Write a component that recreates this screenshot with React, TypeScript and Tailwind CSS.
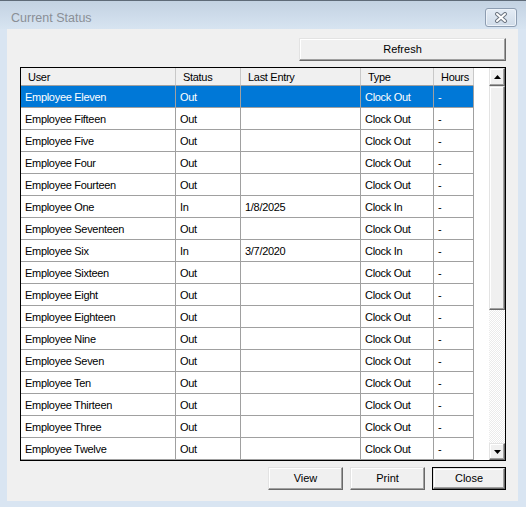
import React from "react";

type Row = { user: string; status: string; last: string; type: string; hours: string };

const names = [
  "Eleven", "Fifteen", "Five", "Four", "Fourteen", "One", "Seventeen", "Six", "Sixteen",
  "Eight", "Eighteen", "Nine", "Seven", "Ten", "Thirteen", "Three", "Twelve",
];

const rows: Row[] = names.map((n) => {
  if (n === "One") return { user: "Employee One", status: "In", last: "1/8/2025", type: "Clock In", hours: "-" };
  if (n === "Six") return { user: "Employee Six", status: "In", last: "3/7/2020", type: "Clock In", hours: "-" };
  return { user: "Employee " + n, status: "Out", last: "", type: "Clock Out", hours: "-" };
});

const font = { fontFamily: '"Liberation Sans", Arial, sans-serif' };

function Btn({ label, def, className }: { label: string; def?: boolean; className: string }) {
  const inner = (
    <div className="flex h-full w-full items-center justify-center border border-t-[#e3e3e3] border-l-[#e3e3e3] border-b-[#696969] border-r-[#696969] bg-[#f0f0f0] text-[11px] text-black shadow-[inset_-1px_-1px_0_#a0a0a0,inset_1px_1px_0_#ffffff]">
      {label}
    </div>
  );
  return def ? (
    <div className={"border border-black " + className}>{inner}</div>
  ) : (
    <div className={className}>{inner}</div>
  );
}

function ScrollBox({ className, children }: { className: string; children?: React.ReactNode }) {
  return (
    <div className={"flex items-center justify-center border border-t-[#e3e3e3] border-l-[#e3e3e3] border-b-[#696969] border-r-[#696969] bg-[#f0f0f0] shadow-[inset_-1px_-1px_0_#a0a0a0,inset_1px_1px_0_#ffffff] " + className}>
      {children}
    </div>
  );
}

const cols = ["w-[155px]", "w-[65px]", "w-[120px]", "w-[73px]", "w-[40px]"];

export default function App() {
  return (
    <div className="flex h-[507px] w-[526px] flex-col border-t border-t-[#5f6b78] bg-[#d9e5f2]" style={font}>
      {/* Title bar */}
      <div className="flex h-[28px] items-start justify-between bg-gradient-to-b from-[#c3d2e2] to-[#d7e4f1] pl-[11px] pr-[9px] pt-[7px]">
        <span className="mt-[3px] text-[12.5px] leading-[15px] text-[#8a8f96]">Current Status</span>
        <div className="flex h-[19px] w-[32px] items-center justify-center rounded-[3px] border border-[#8d9db1] bg-gradient-to-b from-[#e4ecf5] to-[#cfdbe8] shadow-[inset_0_0_0_1px_#eef3f9]">
          <svg width="14" height="11" viewBox="0 0 14 11">
            <path d="M3 2 L11 9 M11 2 L3 9" stroke="#6d7682" strokeWidth="4" strokeLinecap="round" />
            <path d="M3 2 L11 9 M11 2 L3 9" stroke="#ffffff" strokeWidth="2" strokeLinecap="round" />
          </svg>
        </div>
      </div>

      {/* Content */}
      <div className="mb-[6px] ml-[7px] mr-[8px] flex flex-1 flex-col bg-[#f0f0f0] pb-[11px] pl-[13px] pr-[12px] pt-[9px]">
        <div className="flex justify-end">
          <Btn label="Refresh" className="h-[23px] w-[207px]" />
        </div>

        {/* List */}
        <div className="mt-[6px] flex h-[394px] w-[486px] border border-black bg-white tracking-[-0.3px]">
          <div className="flex flex-1 flex-col">
            <div className="flex h-[18px]">
              {["User", "Status", "Last Entry", "Type", "Hours"].map((h, i) => (
                <div
                  key={h}
                  className={cols[i] + " flex items-center border-b border-r border-b-[#a0a0a0] border-r-[#c8c8c8] bg-[#f0f0f0] pl-[7px] pt-[1px] text-[11px] text-black"}
                >
                  {h}
                </div>
              ))}
            </div>
            {rows.map((r, ri) => {
              const sel = ri === 0;
              const vals = [r.user, r.status, r.last, r.type, r.hours];
              return (
                <div key={ri} className="flex h-[22px]">
                  {vals.map((v, i) => (
                    <div
                      key={i}
                      className={
                        cols[i] +
                        " flex items-center overflow-hidden whitespace-nowrap border-b border-r border-[#a0a0a0] pl-[4px] pt-[1px] text-[11px] " +
                        (sel ? "bg-[#0078d7] text-white" : "text-black")
                      }
                    >
                      {v}
                    </div>
                  ))}
                </div>
              );
            })}
          </div>
          {/* Scrollbar */}
          <div className="flex w-[16px] flex-col">
            <ScrollBox className="h-[18px]">
              <svg width="7" height="4" viewBox="0 0 7 4">
                <path d="M0 4 L3.5 0 L7 4 Z" fill="#000" />
              </svg>
            </ScrollBox>
            <ScrollBox className="h-[224px]" />
            <div className="flex-1 bg-[repeating-conic-gradient(#ffffff_0_25%,#ebebeb_0_50%)] bg-[length:2px_2px]" />
            <ScrollBox className="h-[17px]">
              <svg width="7" height="4" viewBox="0 0 7 4">
                <path d="M0 0 L7 0 L3.5 4 Z" fill="#000" />
              </svg>
            </ScrollBox>
          </div>
        </div>

        <div className="mt-[6px] flex justify-end gap-[7px]">
          <Btn label="View" className="h-[23px] w-[75px]" />
          <Btn label="Print" className="h-[23px] w-[75px]" />
          <Btn label="Close" def className="h-[23px] w-[74px]" />
        </div>
      </div>
    </div>
  );
}
